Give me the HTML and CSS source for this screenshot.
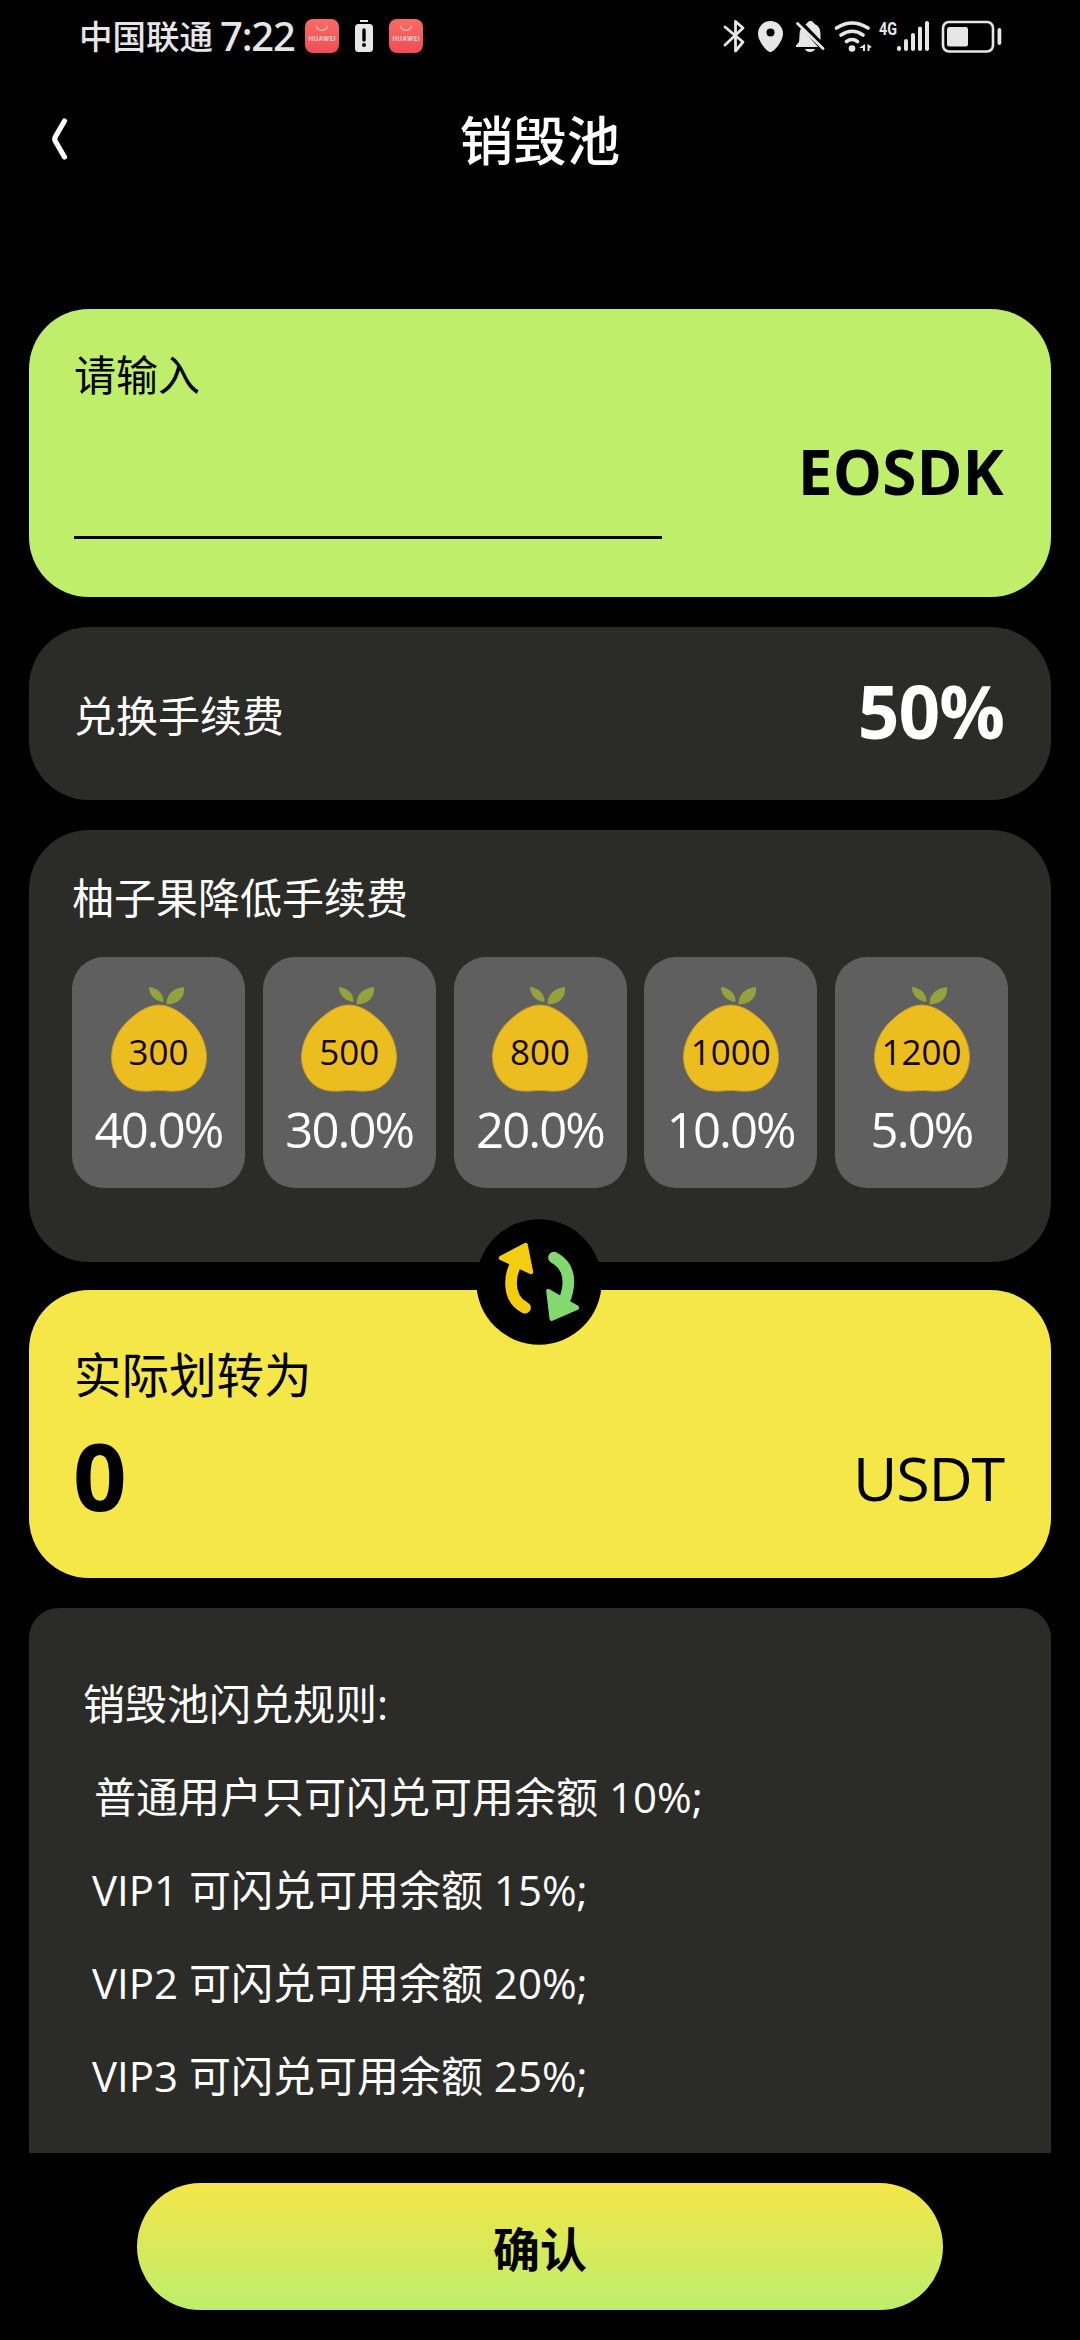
FILE: index.html
```html
<!DOCTYPE html>
<html lang="zh-CN">
<head>
<meta charset="utf-8">
<title>销毁池</title>
<link rel="stylesheet" href="styles.css">
</head>
<body>
<svg width="0" height="0" class="defs">
  <linearGradient id="red" x1="0" y1="0" x2="0" y2="1"><stop offset="0" stop-color="#fa6c66"/><stop offset="1" stop-color="#f04c57"/></linearGradient>
  <symbol id="fruit" viewBox="0 0 96 106">
    <path fill="#ecbd1e" stroke="#c69a2c" stroke-width="1" d="M48 19C60 19 71 27 81 37C90 46 95.500 59 95.500 71C95.500 91 81 105 65 105C58 105.500 53 104.500 48 104.500C43 104.500 38 105.500 31 105C15 105 .5 91 .5 71C.5 59 6 46 15 37C25 27 36 19 48 19Z"/>
    <path fill="#93a23d" d="M38 1C47 2 53 8 52.500 16C44 15 38 9 38 1Z"/>
    <path fill="#93a23d" d="M73 1C74 11 68 18 55.500 18.500C55 9 62 2 73 1Z"/>
  </symbol>
</svg>
<header class="status">
  <div class="status-left">
    <span class="carrier">中国联通</span><span class="time">7:22</span>
    <svg width="34" height="34" viewBox="0 0 34 34"><rect width="34" height="34" rx="8" fill="url(#red)"/><path d="M11.500 6.500a5.500 5 0 0 0 11 0" fill="none" stroke="#ffb39f" stroke-width="1.500"/><text class="brand" x="3.500" y="22" textLength="27">HUAWEI</text></svg>
    <svg class="low" width="18" height="33" viewBox="0 0 18 33"><path fill="#e6e6e6" d="M5 0h8v2H5zM3.500 4h11A3.500 3.500 0 0 1 18 7.500v21a3.500 3.500 0 0 1-3.500 3.500h-11A3.500 3.500 0 0 1 0 28.500v-21A3.500 3.500 0 0 1 3.500 4z"/><path d="M9 10v10" stroke="#000" stroke-width="3.400" stroke-linecap="round"/><circle cx="9" cy="25" r="2" /></svg>
    <svg width="34" height="34" viewBox="0 0 34 34"><rect width="34" height="34" rx="8" fill="url(#red)"/><path d="M11.500 6.500a5.500 5 0 0 0 11 0" fill="none" stroke="#ffb39f" stroke-width="1.500"/><text class="brand" x="3.500" y="22" textLength="27">HUAWEI</text></svg>
  </div>
  <svg class="status-right" width="280" height="36" viewBox="722 18 280 36" fill="#e6e6e6">
    <path d="M725 27l18 15-7.500 9V21.500L743 28 725 45" fill="none" stroke="#e6e6e6" stroke-width="2.800" stroke-linejoin="round" stroke-linecap="round"/>
    <path fill-rule="evenodd" d="M770.500 21a12.500 12.500 0 0 1 12.500 12.500c0 8-9 18.500-12.500 18.500S758 41.500 758 33.500A12.500 12.500 0 0 1 770.500 21zm0 7.500a4 4 0 1 0 0 8 4 4 0 0 0 0-8z"/>
    <path d="M801.500 28c-2 3-2 5-2 8l-.5 6-3 3.500v1.500h22zM805.500 24.500c2-1 2-3.500 5-3.500s3 2.500 5 3.500c4 2 5 6 5 10v5.500zM805 49h10c-1 4-9 4-10 0z"/>
    <path d="M797.500 23.500l25.500 25" stroke="#e6e6e6" stroke-width="2.800" stroke-linecap="round"/>
    <g fill="none" stroke="#e6e6e6" stroke-width="3.600" stroke-linecap="round"><path d="M836.500 28q15.500-10 31.500 0M841 35q11.500-7.500 22 0M846.500 41.500q5.500-4 11 0"/></g>
    <circle cx="852" cy="48.500" r="3.300"/>
    <path d="M865 44v7h-2v-3h-4zM867.500 44l4.500 3-2.500 1v3h-2z"/>
    <text class="network" x="879" y="35" textLength="18" lengthAdjust="spacingAndGlyphs">4G</text>
    <g stroke="#e6e6e6" stroke-width="4" stroke-linecap="round"><path d="M899 48v1M906 41v8M913 35v14M920 28.500v20.500M927 23v26"/></g>
    <rect x="943" y="22" width="50" height="29.500" rx="6" fill="none" stroke="#e6e6e6" stroke-width="2.600"/>
    <rect x="947" y="27" width="21" height="19.500" rx="2.500"/><rect x="997.500" y="28" width="3.800" height="17" rx="1.900"/>
  </svg>
</header>
<nav class="nav">
  <svg class="back" width="20" height="46" viewBox="0 0 20 46"><path d="M14.500 4L5.500 19.500Q4 22 5.500 24.500L14.500 40" fill="none" stroke="#fff" stroke-width="5.200" stroke-linecap="round" stroke-linejoin="round"/></svg>
  <h1 class="title">销毁池</h1>
</nav>
<main class="cards">
  <section class="card input-card">
    <div class="field"><span class="label">请输入</span></div>
    <span class="coin">EOSDK</span>
  </section>
  <section class="card fee-card"><span class="label">兑换手续费</span><span class="fee">50%</span></section>
  <section class="card discount-card">
    <h2 class="label">柚子果降低手续费</h2>
    <div class="tiles">
      <div class="tile"><div class="fruit"><svg width="96" height="106"><use href="#fruit"/></svg><span class="count">300</span></div><span class="rate">40.0%</span></div>
      <div class="tile"><div class="fruit"><svg width="96" height="106"><use href="#fruit"/></svg><span class="count">500</span></div><span class="rate">30.0%</span></div>
      <div class="tile"><div class="fruit"><svg width="96" height="106"><use href="#fruit"/></svg><span class="count">800</span></div><span class="rate">20.0%</span></div>
      <div class="tile"><div class="fruit"><svg width="96" height="106"><use href="#fruit"/></svg><span class="count">1000</span></div><span class="rate">10.0%</span></div>
      <div class="tile"><div class="fruit"><svg width="96" height="106"><use href="#fruit"/></svg><span class="count">1200</span></div><span class="rate">5.0%</span></div>
    </div>
  </section>
  <section class="card result-card">
    <svg class="swap" width="126" height="126" viewBox="108 87 376 378">
      <circle cx="296" cy="276" r="188"/>
      <g fill="#f2cd10" stroke="#f2cd10" stroke-linecap="round" stroke-linejoin="round"><path d="M254 353Q212 332 212 278Q212 250 225 226" fill="none" stroke-width="35"/><path d="M182 204L256 165L272 246Z" stroke-width="13"/></g>
      <g fill="#84d870" stroke="#84d870" stroke-linecap="round" stroke-linejoin="round"><path d="M341 203Q384 226 384 275Q384 304 372 330" fill="none" stroke-width="35"/><path d="M324 303L410 353L334 386Z" stroke-width="13"/></g>
    </svg>
    <span class="result-label">实际划转为</span>
    <div class="result"><strong class="amount">0</strong><span class="unit">USDT</span></div>
  </section>
  <section class="rules">
    <p class="rules-title">销毁池闪兑规则:</p>
    <p class="rule first">普通用户只可闪兑可用余额 10%;</p>
    <p class="rule">VIP1 可闪兑可用余额 15%;</p>
    <p class="rule">VIP2 可闪兑可用余额 20%;</p>
    <p class="rule">VIP3 可闪兑可用余额 25%;</p>
  </section>
</main>
<footer class="footer"><button class="confirm">确认</button></footer>
</body>
</html>
```
FILE: styles.css
```css
* { box-sizing: border-box; margin: 0; padding: 0; }
body {
  width: 1080px;
  height: 2340px;
  overflow: hidden;
  background: #000;
  color: #fff;
  font-family: "Open Sans", "Noto Sans CJK SC", sans-serif;
  display: flex;
  flex-direction: column;
}
svg { display: block; flex: none; }
.defs { height: 0; }
.brand { font: 600 6px Inter, sans-serif; fill: #ffe1dc; }
.network { font: 700 19px Roboto, sans-serif; }
.status { height: 72px; display: flex; justify-content: space-between; padding: 18px 78px 0 79px; color: #e6e6e6; }
.status-left { display: flex; align-items: center; height: 36px; }
.carrier { font-size: 33.5px; line-height: 50px; font-weight: 500; width: 141px; white-space: nowrap; }
.time { font-family: "Noto Sans", sans-serif; font-size: 40px; line-height: 56px; font-weight: 500; letter-spacing: -1.2px; width: 85px; }
.low { margin: 0 16px; }
.nav { height: 137px; display: flex; align-items: center; justify-content: center; padding: 0 50px; }
.back { margin: -2px auto 0 0; }
.title { font-size: 53.5px; line-height: 80px; font-weight: 500; margin-right: auto; padding-right: 20px; }
.cards { padding: 100px 29px 0; flex: none; height: 1944px; display: flex; flex-direction: column; gap: 30px; }
.card { border-radius: 60px; background: #2b2b28; flex: none; padding: 0 47px 0 45px; }
.label { font-size: 42px; line-height: 62px; font-weight: 400; }
.input-card { height: 288px; background: #beee6a; color: #000; display: flex; justify-content: space-between; align-items: flex-start; }
.field { width: 588px; height: 230px; border-bottom: 3px solid #000; padding-top: 35px; }
.coin { font-size: 62px; line-height: 86px; font-weight: 700; letter-spacing: 0.2px; margin-top: 119px; }
.fee-card { height: 173px; display: flex; align-items: center; justify-content: space-between; }
.fee-card .label { padding-top: 4px; }
.fee { font-size: 73px; line-height: 100px; font-weight: 700; letter-spacing: -1px; padding-bottom: 6px; }
.discount-card { height: 432px; padding: 37px 43px 0; }
.tiles { display: flex; justify-content: space-between; margin-top: 28px; }
.tile { width: 173px; height: 231px; border-radius: 32px; background: #5f5f5f; display: flex; flex-direction: column; align-items: center; padding-top: 29px; }
.fruit { display: grid; }
.fruit > * { grid-area: 1 / 1; }
.count { align-self: start; justify-self: center; color: #120800; font-size: 35px; line-height: 48px; margin-top: 42px; }
.rate { font-size: 49px; line-height: 68px; font-weight: 500; letter-spacing: -1.9px; margin-top: 3px; }
.result-card { position: relative; height: 288px; margin-top: -2px; background: #f4e747; color: #000; display: flex; flex-direction: column; padding-top: 50px; }
.swap { position: absolute; left: 447px; top: -71px; }
.result-label { font-size: 47.5px; line-height: 70px; }
.result { display: flex; justify-content: space-between; align-items: center; height: 130px; margin-top: 3px; }
.amount { font-size: 94px; line-height: 130px; letter-spacing: -2px; margin: -6px 0 0 -1px; }
.unit { font-size: 61px; line-height: 86px; letter-spacing: -1.2px; }
.rules { background: #2b2b28; border-radius: 30px 30px 0 0; flex: 1; padding: 49px 54px 0; font-size: 42px; line-height: 93px; white-space: nowrap; }
.rule { padding-left: 9px; }
.first { padding-left: 11px; }
.footer { padding-top: 30px; display: flex; justify-content: center; }
.confirm { width: 806px; height: 127px; border: 0; border-radius: 64px; background: linear-gradient(#f5e548, #bdee6c); font: 700 47px/70px "Noto Sans CJK SC", sans-serif; color: #000; }
```
